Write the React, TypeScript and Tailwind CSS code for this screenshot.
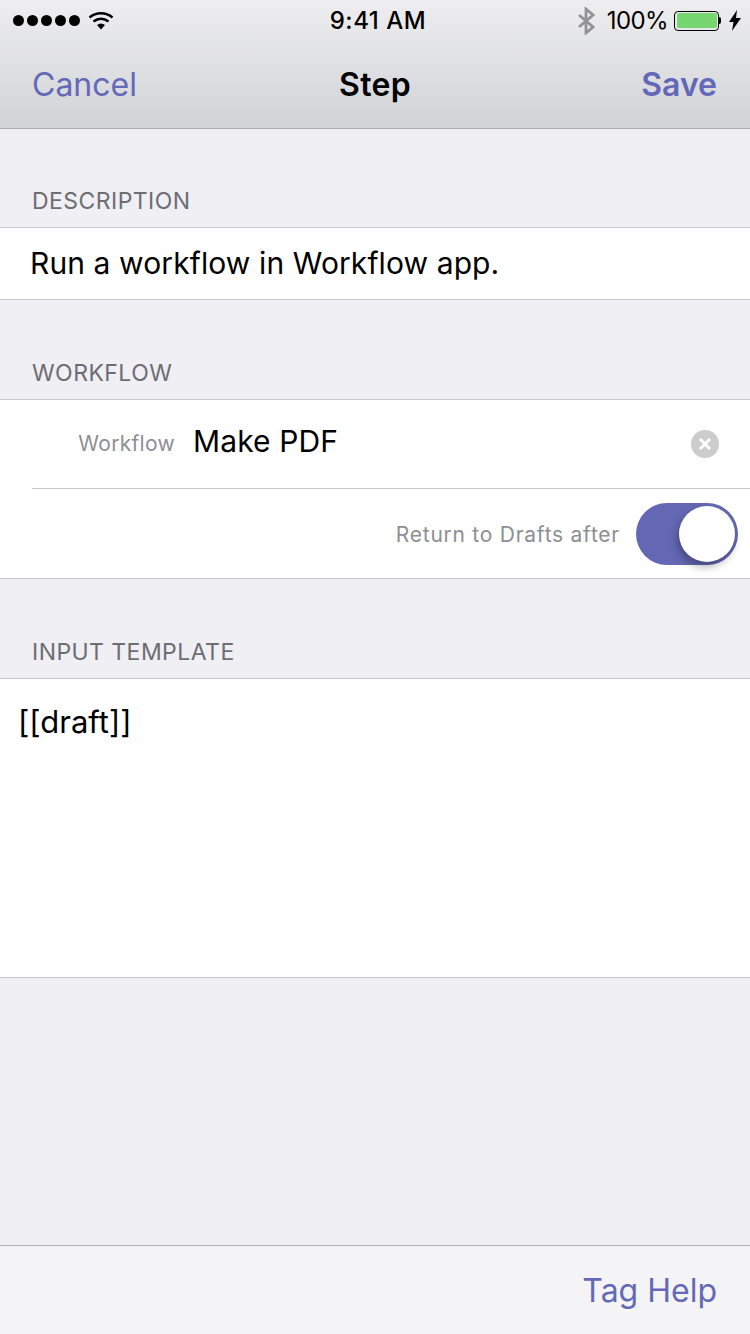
const font = { fontFamily: 'Inter, "Liberation Sans", sans-serif' };

const SectionHeader = ({ label, className }: { label: string; className: string }) => (
  <div className={`flex items-end border-b border-[#c8c7cc] pl-8 text-[23px] leading-none tracking-[0.45px] text-[#6d6d72] ${className}`}>
    <span>{label}</span>
  </div>
);

const App = () => {
  return (
    <div style={font} className="flex h-[1334px] w-[750px] flex-col overflow-hidden bg-[#efeff4] text-black">
      <header className="h-[129px] shrink-0 border-b border-[#aeaeb2] bg-gradient-to-b from-[#eeeef0] to-[#d2d3d7]">
        <div className="flex h-[40px] items-center justify-between pl-[13px] pr-[9px] pt-[1px]">
          <div className="flex w-[240px] items-center gap-[8px]">
            <div className="flex gap-[3px]">
              {[0, 1, 2, 3, 4].map((i) => (
                <span key={i} className="h-[11px] w-[11px] rounded-full bg-black" />
              ))}
            </div>
            <svg width="26" height="19" viewBox="0 0 26 19">
              <path d="M1.500 6.500C8 .8 18 .8 24.500 6.500" fill="none" stroke="#000" strokeWidth="2.400" />
              <path d="M5.500 10.500C10 6.800 16 6.800 20.500 10.500" fill="none" stroke="#000" strokeWidth="2.400" />
              <path d="M9 14C11.500 12 14.500 12 17 14L13 18.500Z" fill="#000" />
            </svg>
          </div>
          <span className="translate-x-px text-[24px] font-medium leading-none tracking-[0.55px]">9:41 AM</span>
          <div className="flex w-[240px] items-center justify-end">
            <svg width="18" height="28" viewBox="0 0 18 28" className="mr-[12px]">
              <path d="M2 8l14 12-7 6V2l7 6L2 20" fill="none" stroke="#939393" strokeWidth="2.800" />
            </svg>
            <span className="mr-[6px] text-[24px] leading-none tracking-[-0.6px]">100%</span>
            <div className="h-[20px] w-[45px] rounded-[4px] border border-black p-[1.5px]">
              <div className="h-full w-full rounded-[2px] bg-[#76d672]" />
            </div>
            <div className="mr-[8px] h-[7px] w-[2px] rounded-r-full bg-black" />
            <svg width="12" height="21" viewBox="0 0 12 21">
              <path d="M8 0 0 12h4.500L3 21l9-13H7Z" fill="#000" />
            </svg>
          </div>
        </div>
        <div className="grid h-[88px] grid-cols-3 items-center px-[33px] pt-[2px] text-[32px] leading-none">
          <span className="-ml-px text-[#6468b8]">Cancel</span>
          <span className="text-center font-semibold tracking-[0.3px]">Step</span>
          <span className="text-right font-semibold text-[#6468b8]">Save</span>
        </div>
      </header>

      <SectionHeader label="DESCRIPTION" className="h-[99px] pb-[14px]" />
      <div className="flex h-[72px] items-center border-b border-[#c8c7cc] bg-white pb-[2px] pl-[30px] text-[30px] leading-none tracking-[0.1px]">
        Run a workflow in Workflow app.
      </div>

      <SectionHeader label="WORKFLOW" className="h-[100px] pb-[14px]" />
      <div className="border-b border-[#c8c7cc] bg-white pl-8">
        <div className="flex h-[89px] items-center border-b border-[#c8c7cc] pr-[30px]">
          <span className="w-[143px] text-right text-[21px] tracking-[0.3px] text-[#8e8e93]">Workflow</span>
          <span className="mb-[6px] ml-[18px] flex-1 text-[30px] leading-none tracking-[0.1px]">Make PDF</span>
          <div className="mb-[1px] flex h-[28px] w-[28px] -translate-x-px items-center justify-center rounded-full bg-[#cccccc]">
            <svg width="14" height="14" viewBox="0 0 14 14">
              <path d="M2 2l10 10M12 2 2 12" stroke="#fff" strokeWidth="3" />
            </svg>
          </div>
        </div>
        <div className="flex h-[89px] items-center justify-end pr-[12px]">
          <span className="mr-4 mt-[3px] text-[21px] tracking-[0.75px] text-[#8e8e93]">Return to Drafts after</span>
          <div className="relative h-[62px] w-[102px] rounded-full bg-[#6468b4]">
            <span className="absolute left-[43px] top-[3px] h-[56px] w-[56px] rounded-full bg-white shadow-[-2px_5px_9px_rgba(0,0,0,0.3)]" />
          </div>
        </div>
      </div>

      <SectionHeader label="INPUT TEMPLATE" className="h-[100px] pb-[14px]" />
      <div className="h-[299px] border-b border-[#c8c7cc] bg-white pl-[18px] pt-[25px] text-[31px] leading-[36px]">
        [[draft]]
      </div>

      <div className="flex-1" />
      <footer className="flex h-[89px] shrink-0 items-center justify-end border-t border-[#b2b2b2] bg-[#f4f4f6] pr-[33px] pt-[2px] text-[32px] text-[#6468b8]">
        Tag Help
      </footer>
    </div>
  );
};

export default App;
